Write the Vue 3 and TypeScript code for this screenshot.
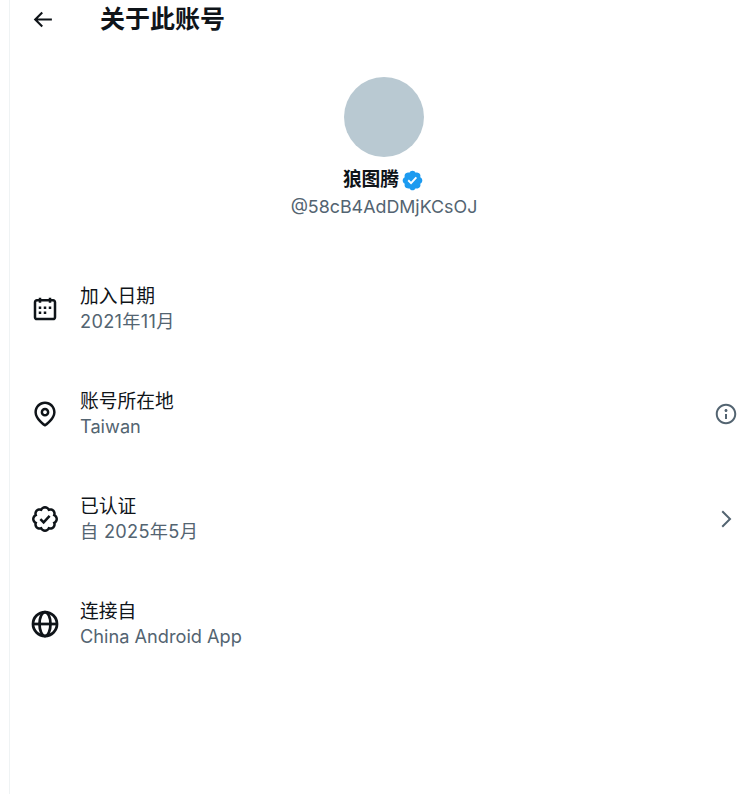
<script setup lang="ts">
interface Row {
  title: string
  sub: string
  icon: string
  date?: boolean
  side?: 'info' | 'chevron'
}

const badge = 'M20.396 11c-.018-.646-.215-1.275-.57-1.816-.354-.54-.852-.972-1.438-1.246.223-.607.27-1.264.14-1.897-.131-.634-.437-1.218-.882-1.687-.47-.445-1.053-.75-1.687-.882-.633-.13-1.29-.083-1.897.14-.273-.587-.704-1.086-1.245-1.44S11.647 1.62 11 1.604c-.646.017-1.273.213-1.813.568s-.969.854-1.24 1.44c-.608-.223-1.267-.272-1.902-.14-.635.13-1.22.436-1.69.882-.445.47-.749 1.055-.878 1.688-.13.633-.08 1.29.144 1.896-.587.274-1.087.705-1.443 1.245-.356.54-.555 1.17-.574 1.817.02.647.218 1.276.574 1.817.356.54.856.972 1.443 1.245-.224.606-.274 1.263-.144 1.896.13.634.433 1.218.877 1.688.47.443 1.054.747 1.687.878.633.132 1.29.084 1.897-.136.274.586.705 1.084 1.246 1.439.54.354 1.17.551 1.816.569.647-.016 1.276-.213 1.817-.567s.972-.854 1.245-1.44c.604.239 1.266.296 1.903.164.636-.132 1.22-.447 1.68-.907.46-.46.776-1.044.908-1.681s.075-1.299-.165-1.903c.586-.274 1.084-.705 1.439-1.246.354-.54.551-1.17.569-1.816z'
const badgeCheck = 'M9.662 14.85l-3.429-3.428 1.293-1.302 2.072 2.072 4.4-4.794 1.347 1.246z'

const rows: Row[] = [
  {
    title: '加入日期',
    sub: '2021年11月',
    icon: 'calendar',
    date: true,
  },
  {
    title: '账号所在地',
    sub: 'Taiwan',
    icon: 'pin',
    side: 'info',
  },
  {
    title: '已认证',
    sub: '自 2025年5月',
    icon: 'verified',
    date: true,
    side: 'chevron',
  },
  {
    title: '连接自',
    sub: 'China Android App',
    icon: 'globe',
  },
]
</script>

<template>
  <div class="page">
    <div class="column">
      <header class="top">
        <svg class="back" viewBox="0 0 24 24"><path d="M7.414 13l5.043 5.04-1.414 1.42L3.586 12l7.457-7.46 1.414 1.42L7.414 11H21v2H7.414z" /></svg>
        <h1>关于此账号</h1>
      </header>

      <section class="profile">
        <div class="avatar"></div>
        <div class="name">
          <span>狼图腾</span>
          <svg class="badge" viewBox="0 0 22 22"><path :d="badge" fill="#1d9bf0" /><path :d="badgeCheck" fill="#fff" /></svg>
        </div>
        <div class="handle">@58cB4AdDMjKCsOJ</div>
      </section>

      <ul class="rows">
        <li v-for="row in rows" :key="row.title" class="row">
          <svg v-if="row.icon === 'calendar'" class="icon" viewBox="0 0 24 24"><path d="M7 4V3h2v1h6V3h2v1h1.5C19.89 4 21 5.12 21 6.5v12c0 1.38-1.11 2.5-2.5 2.5h-13C4.12 21 3 19.88 3 18.5v-12C3 5.12 4.12 4 5.5 4H7zm0 2H5.5c-.27 0-.5.22-.5.5v12c0 .28.23.5.5.5h13c.28 0 .5-.22.5-.5v-12c0-.28-.22-.5-.5-.5H17v1h-2V6H9v1H7V6zm0 6h2v-2H7v2zm0 4h2v-2H7v2zm4-4h2v-2h-2v2zm0 4h2v-2h-2v2zm4-4h2v-2h-2v2z" /></svg>
          <svg v-else-if="row.icon === 'pin'" class="icon" viewBox="0 0 24 24"><path d="M12 7c-1.93 0-3.5 1.57-3.5 3.5S10.07 14 12 14s3.5-1.57 3.5-3.5S13.93 7 12 7zm0 5c-.827 0-1.5-.673-1.5-1.5S11.173 9 12 9s1.5.673 1.5 1.5S12.827 12 12 12zm0-10c-4.687 0-8.5 3.813-8.5 8.5 0 5.967 7.621 11.116 7.945 11.332l.555.37.555-.37c.324-.216 7.945-5.365 7.945-11.332C20.5 5.813 16.687 2 12 2zm0 17.77c-1.665-1.241-6.5-5.196-6.5-9.27C5.5 6.916 8.416 4 12 4s6.5 2.916 6.5 6.5c0 4.073-4.835 8.028-6.5 9.27z" /></svg>
          <svg v-else-if="row.icon === 'verified'" class="icon line" viewBox="0 0 24 24">
            <path :d="badge" transform="translate(1 1)" />
            <path d="M8.3 12.1l2.6 2.6 4.8-5.2" />
          </svg>
          <svg v-else class="icon line heavy" viewBox="0 0 24 24">
            <circle cx="12" cy="12" r="9.6" />
            <ellipse cx="12" cy="12" rx="4.4" ry="9.6" />
            <path d="M2.4 12h19.2" />
          </svg>
          <div class="text">
            <div class="title">{{ row.title }}</div>
            <div class="sub" :class="{ date: row.date }">{{ row.sub }}</div>
          </div>
          <svg v-if="row.side === 'info'" class="side" viewBox="0 0 24 24"><path d="M13.5 8.5c0 .83-.67 1.5-1.5 1.5s-1.5-.67-1.5-1.5S11.17 7 12 7s1.5.67 1.5 1.5zM13 17v-5h-2v5h2zm-1 5.25c5.66 0 10.25-4.59 10.25-10.25S17.66 1.75 12 1.75 1.75 6.34 1.75 12 6.34 22.25 12 22.25zM20.25 12c0 4.56-3.69 8.25-8.25 8.25S3.75 16.56 3.75 12 7.44 3.75 12 3.75 20.25 7.44 20.25 12z" /></svg>
          <svg v-else-if="row.side === 'chevron'" class="side" viewBox="0 0 24 24"><path d="M14.586 12L7.543 4.96l1.414-1.42L17.414 12l-8.457 8.46-1.414-1.42L14.586 12z" /></svg>
        </li>
      </ul>
    </div>
  </div>
</template>

<style>
html,
body {
  background: #fff;
  overflow: hidden;
}
</style>

<style scoped>
.page {
  width: 745px;
  height: 794px;
  overflow: hidden;
  font-family: Inter, "Noto Sans CJK SC", sans-serif;
  color: #0f1419;
}

.column {
  width: 748px;
  height: 794px;
  margin-left: 9px;
  border-left: 1px solid #eff3f4;
}

.top {
  display: flex;
  align-items: center;
  height: 38px;
  padding-left: 20px;
}

.back {
  width: 25px;
  height: 25px;
  fill: #0f1419;
}

.top h1 {
  margin: 0 0 0 45px;
  font-size: 25px;
  font-weight: 700;
  line-height: 38px;
}

.profile {
  display: flex;
  flex-direction: column;
  align-items: center;
  padding-top: 39px;
}

.avatar {
  width: 80px;
  height: 80px;
  border-radius: 50%;
  background: #b9c9d2;
}

.name {
  display: flex;
  align-items: center;
  gap: 2px;
  margin-top: 10px;
  margin-left: -1px;
  font-size: 18.75px;
  font-weight: 700;
  line-height: 26px;
}

.badge {
  width: 23px;
  height: 23px;
}

.handle {
  margin-top: 2px;
  font-size: 17.85px;
  line-height: 24px;
  color: #536471;
}

.rows {
  list-style: none;
  margin: 0;
  padding: 36px 0 0;
}

.row {
  display: flex;
  align-items: center;
  height: 105px;
  padding: 0 20px;
}

.icon {
  flex: none;
  width: 30px;
  height: 30px;
  margin-top: 2px;
  fill: #0f1419;
}

.line {
  fill: none;
  stroke: #0f1419;
  stroke-width: 2;
}

.heavy {
  stroke-width: 2.2;
}

.text {
  flex: 1;
  margin-left: 20px;
  margin-top: 2px;
}

.title {
  font-size: 18.75px;
  line-height: 25px;
}

.sub {
  font-size: 18.2px;
  line-height: 25px;
  color: #536471;
}

.date {
  letter-spacing: 0.3px;
}

.side {
  flex: none;
  width: 24px;
  height: 24px;
  margin-top: 2px;
  fill: #536471;
}
</style>
